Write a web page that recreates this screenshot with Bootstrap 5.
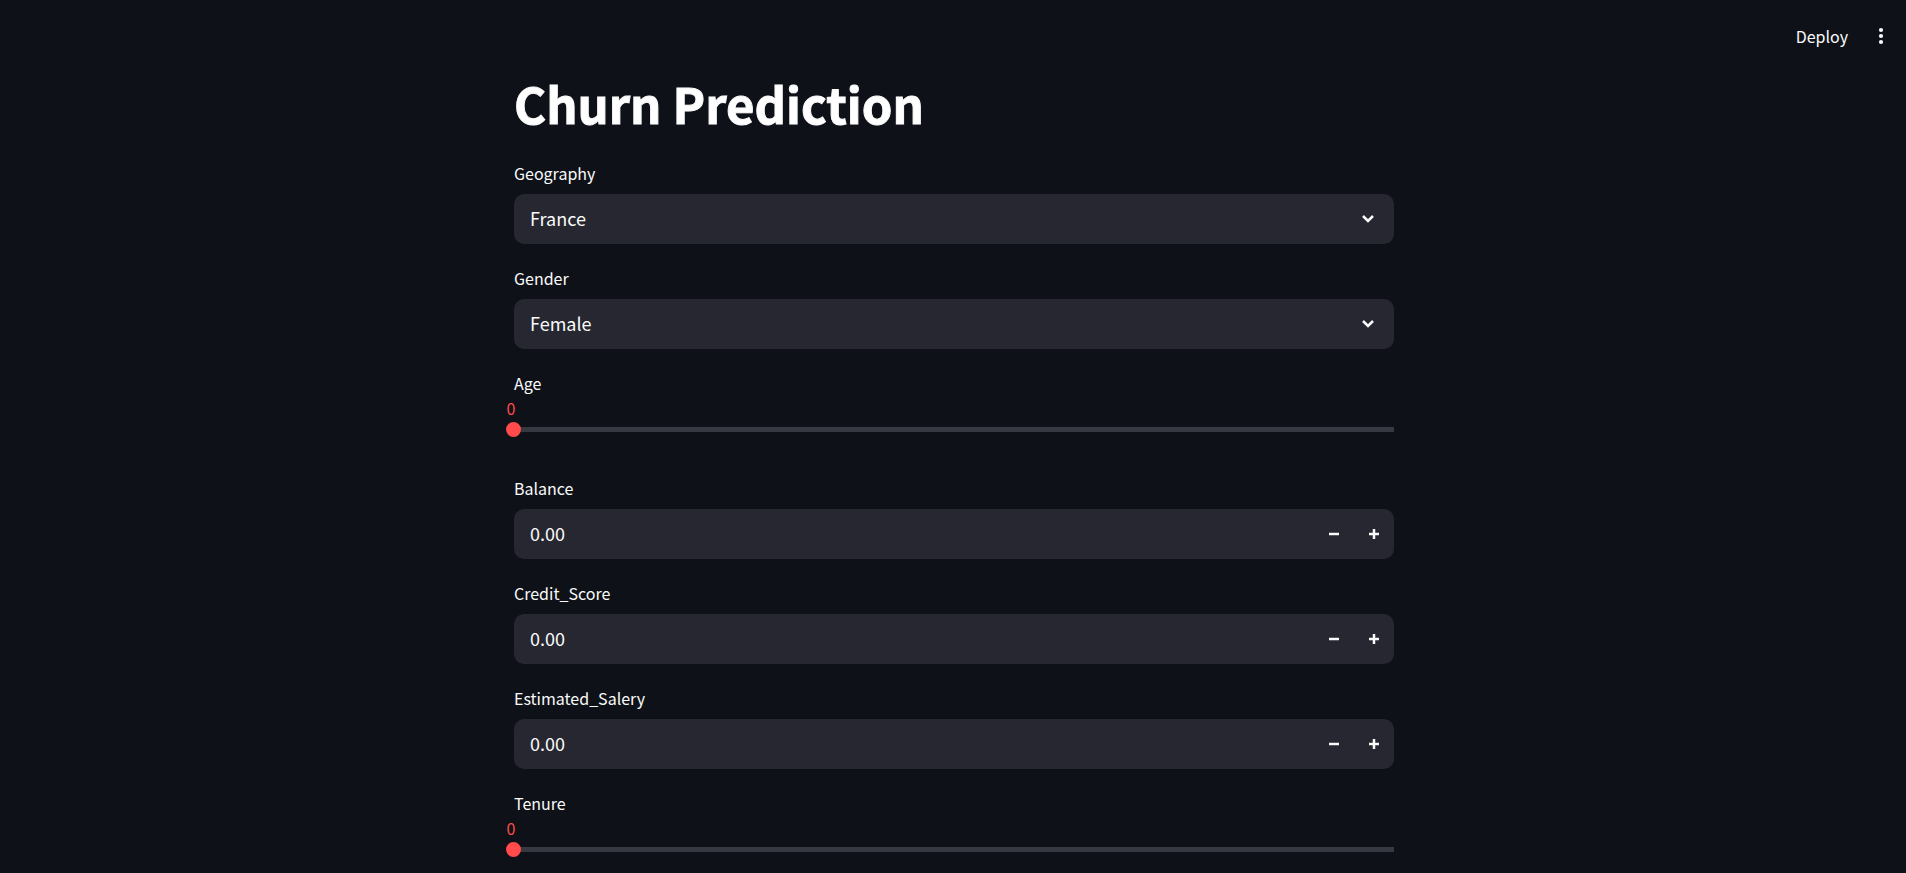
<!DOCTYPE html>
<html lang="en" data-bs-theme="dark">
<head>
<meta charset="utf-8">
<meta name="viewport" content="width=device-width, initial-scale=1">
<title>Churn Prediction</title>
<link rel="stylesheet" href="https://cdn.jsdelivr.net/npm/bootstrap@5.3.0/dist/css/bootstrap.min.css">
<style>
  body {
    background: #0e1117;
    color: #fafafa;
    font-family: "Noto Sans CJK SC", "Noto Sans", sans-serif;
    font-size: 18px;
  }
  .topbar { height: 72px; padding-right: 5px; gap: 13px; }
  .topbar .btn { color: #fafafa; font-size: 16px; line-height: 24px; padding: 0; border: 0; }
  .topbar .menu-btn { width: 40px; height: 40px; }
  .form-area { max-width: 882px; padding-left: 2px; gap: 20px; }
  .page-title { font-size: 49px; line-height: 62px; font-weight: 700; padding-bottom: 5px; -webkit-text-stroke: 1px #fafafa; }
  .field-label { height: 30px; font-size: 16px; line-height: 28px; margin-bottom: 5px; }
  .field-box { background-color: #262730; border-radius: 10px; height: 50px; }
  .field-select {
    background: #262730 url("data:image/svg+xml,%3Csvg xmlns='http://www.w3.org/2000/svg' viewBox='0 0 14 10'%3E%3Cpath d='M2 2l5 5 5-5' fill='none' stroke='%23fafafa' stroke-width='2.5'/%3E%3C/svg%3E") no-repeat right 19px center / 14px 10px;
    border: 0; border-radius: 10px; height: 50px; color: #fafafa; font-size: 18px; line-height: 26px; padding: 11px 48px 13px 16px;
  }
  .field-input, .field-input:focus {
    background: transparent; border: 0; box-shadow: none; color: #fafafa; font-size: 18px; line-height: 26px; padding: 11px 16px 13px;
  }
  .step-btn, .step-btn:hover { width: 40px; color: #fafafa; border: 0; padding: 0; }
  .slider-label { height: 29px; font-size: 16px; line-height: 28px; }
  .slider-value { font-size: 16px; line-height: 20px; height: 20px; width: 16px; margin-left: -11px; color: #ff4b4b; }
  .slider-track { appearance: none; -webkit-appearance: none; display: block; height: 17px; margin: 3px -8px 0; width: calc(100% + 16px); background: linear-gradient(#363942, #363942) no-repeat center / calc(100% - 16px) 5px; }
  .slider-track::-webkit-slider-thumb { -webkit-appearance: none; width: 15px; height: 15px; border-radius: 50%; background: #ff4b4b; }
  .slider-track::-moz-range-thumb { width: 15px; height: 15px; border: 0; border-radius: 50%; background: #ff4b4b; }
  .slider-field { padding-bottom: 16px; }
  .slider-field:last-child { padding-bottom: 0; }
</style>
</head>
<body>
<header class="topbar d-flex justify-content-end align-items-center">
  <button type="button" class="btn">Deploy</button>
  <button type="button" class="btn menu-btn d-flex align-items-center justify-content-center" aria-label="Menu">
    <svg width="6" height="18" viewBox="0 0 6 18" fill="#fafafa"><circle cx="3" cy="3" r="2.1"/><circle cx="3" cy="9" r="2.1"/><circle cx="3" cy="15" r="2.1"/></svg>
  </button>
</header>
<main class="form-area d-flex flex-column mx-auto">
  <h1 class="page-title mb-0">Churn Prediction</h1>
  <div>
    <label class="field-label d-block" for="geography">Geography</label>
    <select class="field-select w-100 form-select" id="geography"><option>France</option><option>Germany</option><option>Spain</option></select>
  </div>
  <div>
    <label class="field-label d-block" for="gender">Gender</label>
    <select class="field-select w-100 form-select" id="gender"><option>Female</option><option>Male</option></select>
  </div>
  <div class="slider-field">
    <label class="slider-label d-block" for="age">Age</label>
    <output class="slider-value d-block text-center" for="age">0</output>
    <input class="slider-track" type="range" id="age" min="0" max="100" value="0">
  </div>
  <div>
    <label class="field-label d-block" for="balance">Balance</label>
    <div class="field-box d-flex">
      <input class="field-input form-control" type="text" inputmode="decimal" id="balance" value="0.00">
      <button type="button" class="btn step-btn flex-shrink-0" aria-label="Decrease balance"><svg class="d-block mx-auto" width="10" height="10" viewBox="0 0 10 10"><path d="M0 5h10" stroke="#fafafa" stroke-width="2.5"/></svg></button>
      <button type="button" class="btn step-btn flex-shrink-0" aria-label="Increase balance"><svg class="d-block mx-auto" width="10" height="10" viewBox="0 0 10 10"><path d="M0 5h10M5 0v10" stroke="#fafafa" stroke-width="2.5"/></svg></button>
    </div>
  </div>
  <div>
    <label class="field-label d-block" for="credit">Credit_Score</label>
    <div class="field-box d-flex">
      <input class="field-input form-control" type="text" inputmode="decimal" id="credit" value="0.00">
      <button type="button" class="btn step-btn flex-shrink-0" aria-label="Decrease credit score"><svg class="d-block mx-auto" width="10" height="10" viewBox="0 0 10 10"><path d="M0 5h10" stroke="#fafafa" stroke-width="2.5"/></svg></button>
      <button type="button" class="btn step-btn flex-shrink-0" aria-label="Increase credit score"><svg class="d-block mx-auto" width="10" height="10" viewBox="0 0 10 10"><path d="M0 5h10M5 0v10" stroke="#fafafa" stroke-width="2.5"/></svg></button>
    </div>
  </div>
  <div>
    <label class="field-label d-block" for="salary">Estimated_Salery</label>
    <div class="field-box d-flex">
      <input class="field-input form-control" type="text" inputmode="decimal" id="salary" value="0.00">
      <button type="button" class="btn step-btn flex-shrink-0" aria-label="Decrease salary"><svg class="d-block mx-auto" width="10" height="10" viewBox="0 0 10 10"><path d="M0 5h10" stroke="#fafafa" stroke-width="2.5"/></svg></button>
      <button type="button" class="btn step-btn flex-shrink-0" aria-label="Increase salary"><svg class="d-block mx-auto" width="10" height="10" viewBox="0 0 10 10"><path d="M0 5h10M5 0v10" stroke="#fafafa" stroke-width="2.5"/></svg></button>
    </div>
  </div>
  <div class="slider-field">
    <label class="slider-label d-block" for="tenure">Tenure</label>
    <output class="slider-value d-block text-center" for="tenure">0</output>
    <input class="slider-track" type="range" id="tenure" min="0" max="10" value="0">
  </div>
</main>
<script src="https://cdn.jsdelivr.net/npm/bootstrap@5.3.0/dist/js/bootstrap.bundle.min.js"></script>
</body>
</html>
